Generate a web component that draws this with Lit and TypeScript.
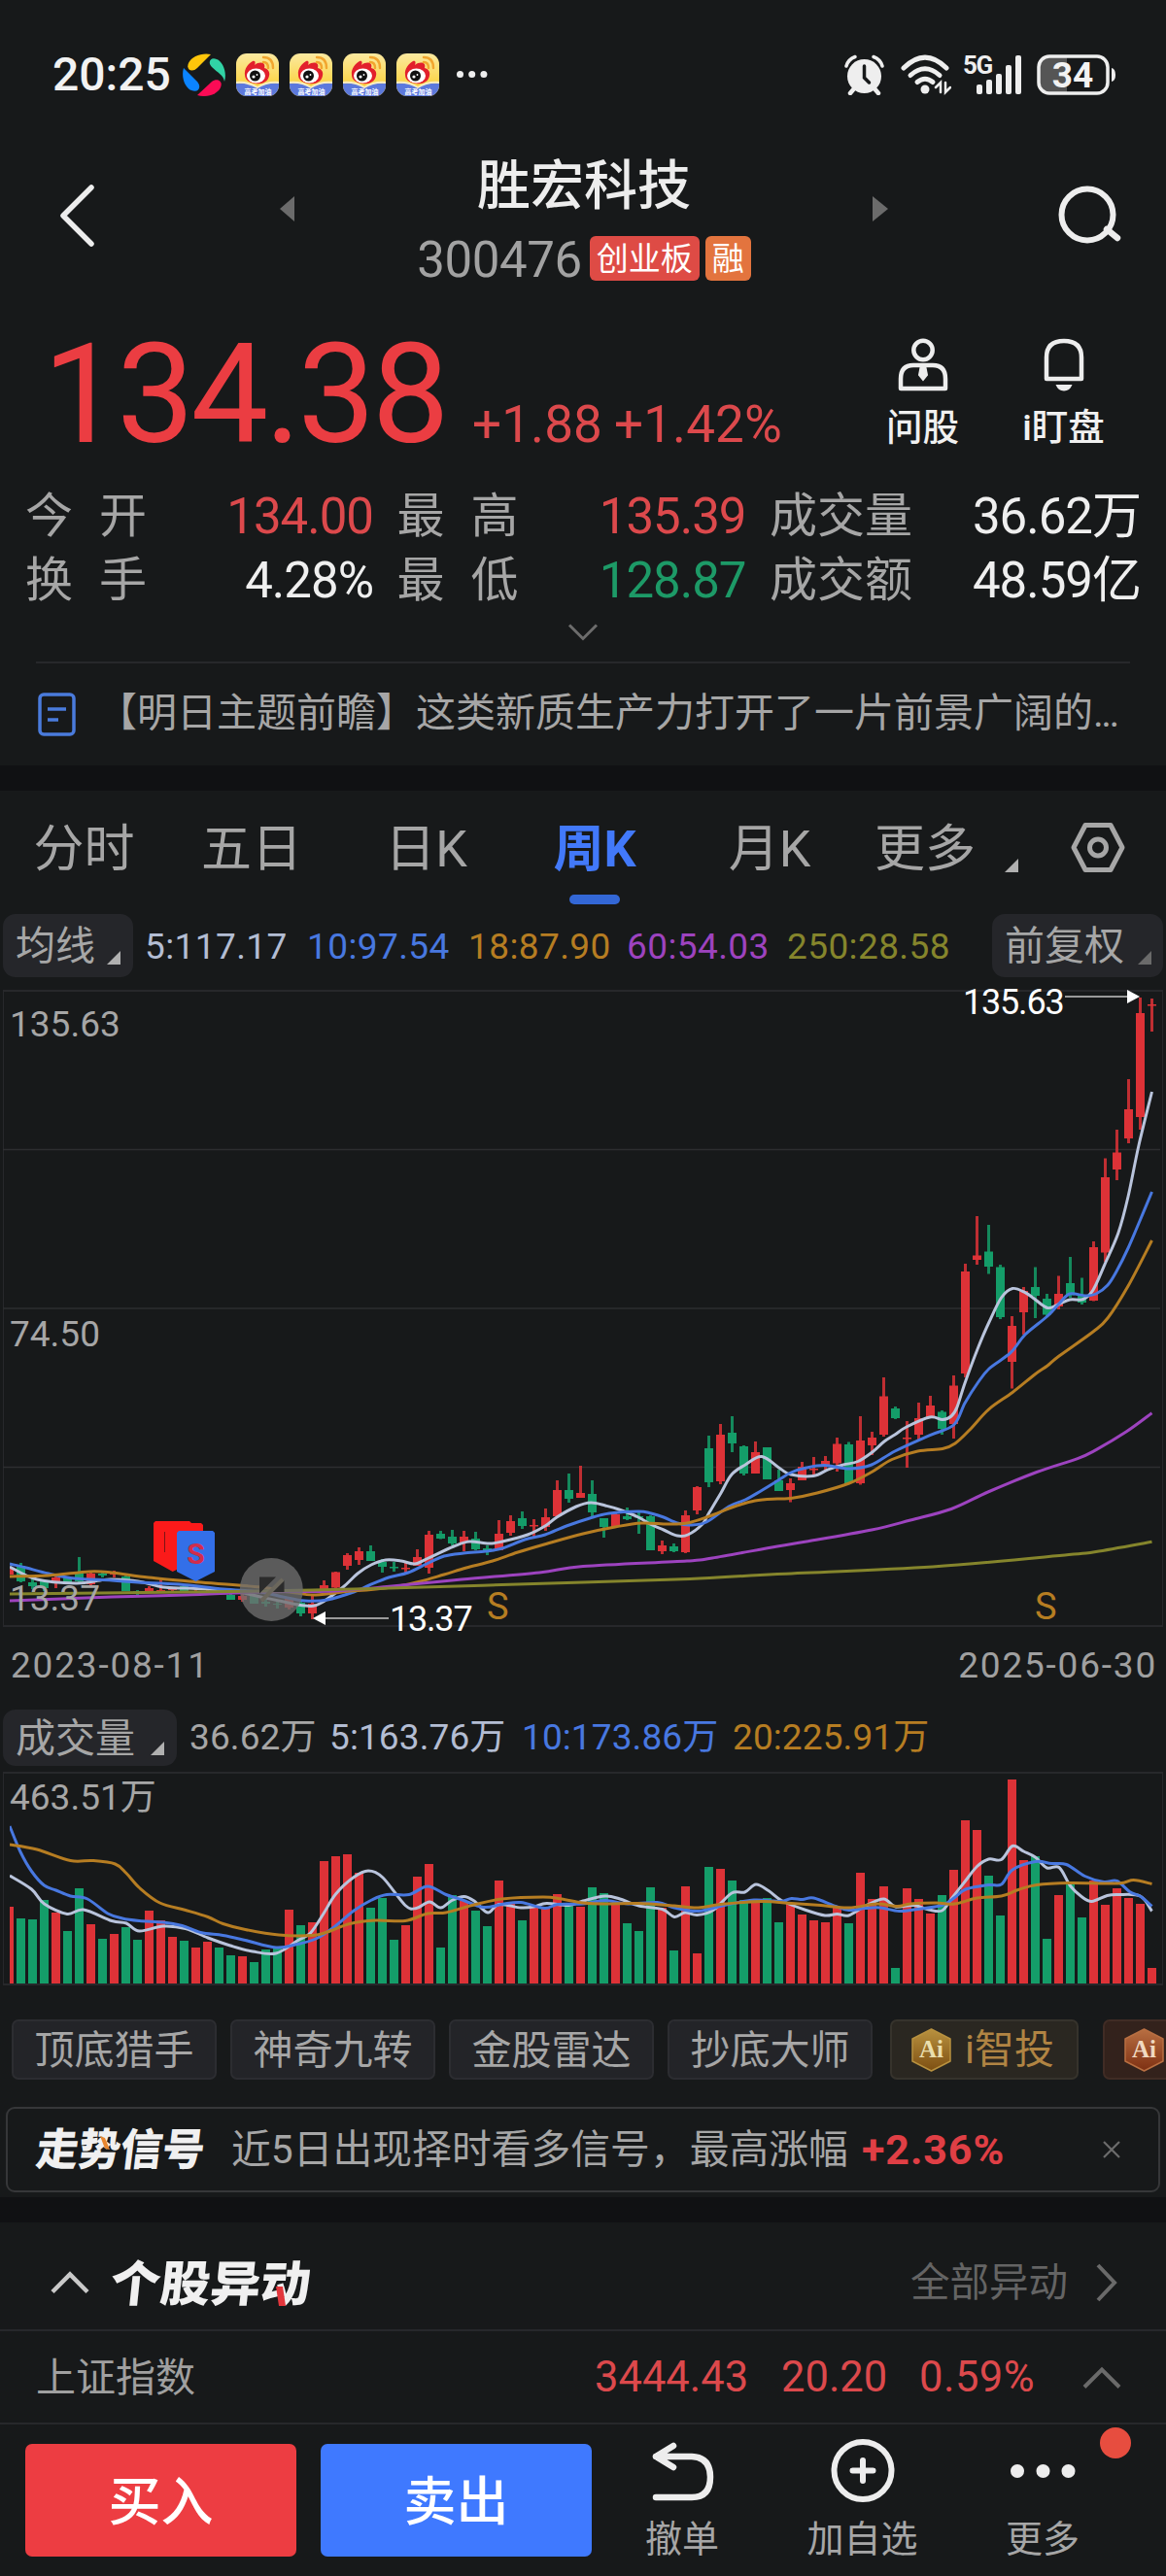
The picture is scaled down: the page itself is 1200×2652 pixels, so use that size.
import { LitElement, html, svg, css } from "lit";
import { customElement } from "lit/decorators.js";

type Pt = [number, number];

// Weekly candles: high, body top, body bottom, low (chart units, y grows downward)
const CANDLES: number[][] = [
  [1615,1615,1621,1621],[1609,1612,1628,1629],[1625,1629,1633,1636],[1627,1628,1635,1638],[1623,1624,1628,1635],
  [1623,1624,1630,1631],[1603,1619,1628,1630],[1619,1620,1631,1632],[1618,1620,1622,1624],[1617,1620,1621,1624],
  [1622,1623,1638,1638],[1637,1638,1639,1642],[1633,1635,1638,1638],[1626,1637,1638,1640],[1634,1635,1637,1638],
  [1633,1633,1638,1638],[1636,1638,1639,1640],[1637,1638,1640,1641],[1638,1639,1641,1641],[1641,1642,1647,1647],
  [1641,1643,1647,1649],[1642,1643,1651,1651],[1647,1649,1651,1654],[1648,1651,1652,1656],[1645,1646,1655,1657],
  [1648,1650,1661,1664],[1643,1651,1661,1667],[1627,1632,1637,1637],[1618,1618.5,1634.5,1635],[1599,1601,1612,1616],
  [1593,1597,1606,1611],[1591,1597,1607,1607],[1605,1608,1613,1619],[1608,1613,1614.5,1618],[1609,1614,1615.5,1619],
  [1595,1603,1612,1612],[1576,1580,1614,1620],[1576,1579,1584,1584.5],[1575,1582,1589,1591],[1576,1582,1588,1597],
  [1577,1584,1595,1596],[1591,1594,1596,1601],[1565,1579,1596,1596],[1560,1566,1578,1581],[1556,1563,1571,1574],
  [1564,1570,1571.5,1583],[1553,1562,1572,1576],[1524,1534,1561,1561],[1517,1534,1543,1547],[1509,1537,1542,1542],
  [1524,1538,1557,1561],[1563,1563,1572,1583],[1556,1559,1572,1572],[1552,1561,1564,1565],[1557,1561,1562.5,1579],
  [1560,1561,1596,1596],[1586,1591,1597,1600],[1589,1592,1597,1598],[1555,1560,1598,1599],[1530,1531,1555,1559],
  [1478,1491,1526,1531],[1466,1477,1525,1528],[1458,1475,1486,1495],[1488,1489,1517,1519],[1484,1495,1517,1517],
  [1490,1490,1523,1523],[1513,1524,1535,1535],[1522,1527,1534,1546.5],[1505,1510,1524,1524],[1500,1512,1513.5,1519],
  [1499,1504,1510,1515],[1480,1486.5,1506.5,1515],[1484.5,1487,1527,1527],[1458,1483,1527,1528.5],[1474,1480,1488,1498],
  [1418,1437.5,1477,1479],[1448,1450,1460,1461],[1463,1480,1481.5,1511],[1444,1460,1477,1482],[1437,1447,1459,1459],
  [1452,1453.5,1471,1477],[1416,1426.5,1466,1481],[1301,1309,1414,1418],[1252,1292.5,1297,1302],[1261,1288.5,1304,1311.5],
  [1302,1304.5,1356,1358],[1355,1365,1402,1429.5],[1325,1329,1351,1374],[1304.5,1325,1334,1357],[1332,1337,1353.5,1355],
  [1313.5,1332,1345,1348],[1294,1321,1333.5,1336],[1315.5,1334,1341,1343],[1278,1284,1339,1339.5],[1192.5,1212,1289.5,1299],
  [1163,1186.5,1204,1215],[1111,1142,1172,1177],[1027,1043,1150,1163],[1028,1034,1035.5,1062],
];

// r = week closed up, g = week closed down
const DIRECTION =
  "rgggrggrgrggrrrgrrggrggg" + "rgrrrrrggg" + "rrrgg" + "rggrrgrrrg" + "r" +
  "ggrgggrgrr" + "grggrggrrr" + "rrgrrrgrrr" + "grrrggrrgg" + "rggrrrrrr";

// Volume bar heights, thirds of a unit
const VOLUME = [
  237,201,198,258,219,162,294,183,138,153,174,135,225,195,144,132,111,129,111,87,84,66,105,111,228,180,189,378,393,399,
  342,234,264,135,180,330,369,111,273,255,225,177,318,246,195,234,237,276,239,237,297,279,243,186,162,297,234,102,300,93,
  360,354,318,258,255,264,189,246,213,195,189,234,186,342,261,300,48,294,261,216,273,351,504,474,333,210,630,381,393,138,
  273,312,204,318,243,294,264,246,48,
];

const UP = "#dd3237";
const DOWN = "#149d69";

const MA5: Pt[] = [[10,1613],[38,1626],[78,1630],[103,1627],[115,1626],[142,1628],[168,1634],[191,1635],[214,1636],[245,1639],[268,1644],[287,1648],[314,1653],[329,1651],[353,1634],[368,1620],[382,1611],[397,1606],[413,1607],[427,1610],[441,1604],[467,1592],[483,1587],[503,1589],[517,1587],[543,1580],[561,1571],[573,1562],[593,1551],[608,1547],[623,1550],[637,1554],[657,1562],[669,1569],[683,1575],[697,1581],[708,1580],[723,1569],[730,1557],[742,1537],[753,1518],[767,1508],[784,1499.5],[803,1512],[814,1518],[837,1519.5],[853,1512.6],[868,1508],[883,1504.5],[897,1495.5],[910,1484],[921,1477],[933,1469],[957,1459],[970,1461.6],[979,1458],[985,1448.6],[993,1424],[1006,1389],[1018,1361],[1030.5,1336],[1042,1326.5],[1055,1330.6],[1065,1337.5],[1078,1346.5],[1089,1343],[1101,1338],[1115,1337.5],[1125,1328],[1137,1301.6],[1151,1269],[1161,1232],[1172,1179],[1185.5,1124]];
const MA10: Pt[] = [[10,1610],[27,1614],[50,1620],[77,1625],[115,1627],[142,1629],[184,1631],[230,1636],[268,1639],[291,1644],[314,1648],[337,1647],[364,1639],[380,1632],[400,1624],[420,1619],[441,1609],[457,1602],[477,1599],[500,1597],[517,1594],[540,1585],[561,1580],[583,1571],[607,1563],[627,1558],[657,1556],[670,1558],[683,1562],[697,1568],[710,1570],[727,1567],[750,1551],[767,1544],[783,1535],[801,1524],[814,1516],[830,1511],[849,1508.6],[874,1512],[897,1508],[921,1494],[957,1477.6],[981.5,1467],[993,1444.5],[1006,1424],[1018,1409],[1040,1392.7],[1055,1374],[1078,1355],[1090,1342],[1101,1332],[1117,1334],[1128,1332],[1140,1323],[1149.5,1308],[1161,1285],[1173,1257],[1185.5,1227]];
const MA18: Pt[] = [[10,1623],[50,1622],[92,1618],[115,1619],[153,1624],[207,1629],[268,1634],[298,1639],[325,1642],[360,1638],[377,1637],[410,1633],[433,1628],[457,1621],[480,1614],[507,1607],[533,1598],[567,1588],[600,1579],[633,1572],[660,1568],[687,1569],[707,1568],[730,1561],[753,1552],[777,1545],[800,1543],[814,1542.5],[841,1537],[874,1527],[897,1515.5],[918,1502.5],[944.5,1494],[970,1491.5],[983,1486],[998,1472],[1018,1450.6],[1042,1433.5],[1065,1415],[1078,1406],[1090,1396],[1125,1371],[1140,1357],[1161,1324],[1185.5,1277]];
const MA60: Pt[] = [[10,1648],[115,1644],[191,1642],[268,1639],[344,1638],[398,1633.5],[475,1626],[555,1619],[600,1612.6],[707,1607],[733,1604],[800,1592],[830,1587],[897,1575],[937,1565],[979,1553.5],[1018,1535.5],[1067,1515.5],[1109,1501.6],[1128,1492.6],[1159,1474],[1185.5,1454.7]];
const MA250: Pt[] = [[10,1641],[268,1638],[400,1635],[600,1629],[710,1625.5],[800,1620.5],[960,1613],[1100,1600.5],[1128,1597.5],[1185.5,1587.3]];

const VMA5: Pt[] = [[10,1931],[32.5,1945],[45.5,1960],[69,1970.5],[86,1966],[115,1977.5],[130,1980],[143.5,1988],[168,1983],[191,1985.5],[214,1995],[237,2003],[260,2009],[284,2011],[306,1998],[319.5,1990],[333,1970],[345.5,1950],[363.5,1933],[379,1926],[394,1933],[417,1961.5],[428.5,1964.5],[442,1958],[453.5,1964],[465,1956.5],[477.5,1952.5],[488,1957],[502,1969],[513.5,1960.5],[536,1964],[549.5,1963],[562.5,1959.5],[585.5,1961.5],[600,1957],[623,1952],[638,1955],[657.5,1962],[681.5,1965.5],[694,1973.5],[705,1969],[717.5,1971.5],[734,1966.5],[753,1949],[766.5,1948],[778,1940],[791,1946.5],[805,1957],[829.5,1966.5],[849,1972],[861.5,1970.5],[873.5,1972],[891,1962],[909.5,1955],[921.5,1963],[940.5,1961.5],[956,1966],[969.5,1967],[979,1955],[993.5,1936.5],[1005.5,1921.5],[1017.5,1914],[1030.5,1914.5],[1042,1900.5],[1053.5,1906],[1065.5,1912],[1077.5,1923],[1090,1922.5],[1101.5,1941.5],[1113,1952.5],[1123.5,1957.5],[1139.5,1951.5],[1151,1950.5],[1173.5,1952],[1185.5,1967.5]];
const VMA10: Pt[] = [[10,1880],[21,1906.5],[32.5,1926.5],[45.5,1941],[57.5,1946],[72.5,1952],[90,1955],[111,1970],[126,1975],[143.5,1977.5],[168,1979],[187.5,1982.5],[206.5,1989.5],[229.5,1992.5],[252.5,1997.5],[284,2005],[306,2001.5],[325,1996],[344.5,1983.5],[363.5,1967.5],[382.5,1956],[398,1950.5],[421,1950.5],[440,1942],[459,1950.5],[474.5,1955.5],[497.5,1963.5],[516.5,1960.5],[536,1958.5],[560.5,1964.5],[574,1960.5],[600,1960],[623,1956.5],[646,1960],[676.5,1958.5],[694,1964],[718.5,1967.5],[745.5,1961.5],[776,1956],[803,1957.5],[814.5,1954.5],[826,1955.5],[837.5,1954],[860,1962.5],[873.5,1966.5],[891,1964.5],[906,1964],[925.5,1967.5],[944.5,1965.5],[969.5,1961.5],[982.5,1953.5],[994,1945],[1017.5,1940.5],[1030.5,1940],[1042,1925],[1065.5,1916.5],[1082,1918.5],[1097.5,1919.5],[1116.5,1931.5],[1136,1937.5],[1149.5,1936.5],[1162.5,1947.5],[1174,1952.5],[1185.5,1962.5]];
const VMA20: Pt[] = [[10,1899],[38,1904],[72.5,1915.5],[95.5,1915.5],[118.5,1919],[130,1928.5],[143.5,1943.5],[164.5,1959],[191,1966.5],[214,1973.5],[229.5,1980.5],[252.5,1986.5],[287,1992],[321.5,1992.5],[337,1989],[360,1980.5],[386.5,1977],[417,1977.5],[440,1970],[459,1969],[486,1961.5],[516.5,1955],[559,1953],[578,1955],[600,1959],[623,1960],[657.5,1959.5],[694,1962],[718.5,1964],[741.5,1960.5],[783.5,1957.5],[814.5,1959.5],[845,1961.5],[873.5,1964],[902.5,1960],[923.5,1962.5],[937,1960],[963.5,1959],[982.5,1960],[1005.5,1954],[1030.5,1952],[1048,1945.5],[1067,1940.5],[1101.5,1938.5],[1151,1939],[1166.5,1935.5],[1185.5,1939.5]];

const centerX = (i: number) => 9.5 + 12 * i;

/** Catmull-Rom spline through the points, as cubic Bézier segments. */
function smooth(p: Pt[]): string {
  let d = `M${p[0][0]} ${p[0][1]}`;
  for (let i = 0; i < p.length - 1; i++) {
    const a = p[i - 1] ?? p[i], b = p[i], c = p[i + 1], e = p[i + 2] ?? c;
    const k = 6;
    d += `C${(b[0] + (c[0] - a[0]) / k).toFixed(1)} ${(b[1] + (c[1] - a[1]) / k).toFixed(1)} ${(c[0] - (e[0] - b[0]) / k).toFixed(1)} ${(c[1] - (e[1] - b[1]) / k).toFixed(1)} ${c[0]} ${c[1]}`;
  }
  return d;
}

const WHITE = "#b9c4dc", BLUE = "#4878e0", ORANGE = "#b67d22", PURPLE = "#9d43bf", OLIVE = "#85852c";

const base = css`
  :host { display: block; }
  * { box-sizing: border-box; }
  svg { display: block; flex: none; }
`;

@customElement("status-bar")
export class StatusBar extends LitElement {
  static styles = [base, css`
    .bar { display: flex; align-items: center; height: 110px; padding: 44px 51px 0 54px; color: #f2f2f2; }
    .time { font-size: 48px; font-weight: 500; width: 134px; line-height: 1; }
    .apps { display: flex; gap: 11px; }
    .dots { margin-left: 17px; }
    .right { display: flex; align-items: center; margin-left: auto; }
    .wifi { margin-left: 17px; }
    .cell { margin-left: 12px; overflow: visible; }
    .batt { margin-left: 15px; overflow: visible; }
    .gen { letter-spacing: -1.5px; }
  `];
  private weibo() {
    return html`<svg width="44" height="44" viewBox="0 0 44 44">
      <defs>
        <linearGradient id="y" x1="0" y1="0" x2="0" y2="1"><stop offset="0" stop-color="#fbe9a0"/><stop offset=".8" stop-color="#fbd23c"/></linearGradient>
        <clipPath id="c"><rect width="44" height="44" rx="11"/></clipPath>
      </defs>
      <g clip-path="url(#c)">
        <rect width="44" height="44" fill="url(#y)"/>
        <path d="M0 31Q12 29 22 35Q32 29 44 31V44H0Z" fill="#5c79dc"/>
        <path d="M0 29Q13 28 22 34Q31 28 44 29V31Q32 30 22 36Q12 30 0 31Z" fill="#f8edc4"/>
      </g>
      <path d="M9 22C8 16 13 10 17 8C20 7 20 10 19 12C24 8 31 9 29 15C33 16 35 19 34 23C33 29 27 32 20 31C13 30 9 27 9 22Z" fill="#e2202c"/>
      <ellipse cx="20.500" cy="23" rx="9.500" ry="7.500" fill="#fff"/>
      <circle cx="19.500" cy="23" r="5.500" fill="#111"/>
      <circle cx="18" cy="24" r="1.600" fill="#fff"/><circle cx="21.500" cy="22" r=".9" fill="#fff"/>
      <path d="M28 4Q38 4 38 15M28 9Q33 9 33 15" fill="none" stroke="#f2a52e" stroke-width="2.400" stroke-linecap="round"/>
      <text x="22.500" y="41.500" font-size="7" fill="#fff" text-anchor="middle" font-weight="700">高考加油</text>
    </svg>`;
  }
  render() {
    return html`<div class="bar">
      <span class="time">20:25</span>
      <div class="apps">
        <svg width="44" height="44" viewBox="0 0 44 44">
          <path d="M29 1C20-1 9 3 6 10C3 17 10 20 15 15Z" fill="#ffc60b"/>
          <path d="M43 29C46 19 41 8 35 6C29 3 25 9 30 14C36 20 42 22 43 29Z" fill="#31d3a5"/>
          <path d="M15 43C25 46 36 42 39 35C42 28 35 25 30 29Z" fill="#fb0b55"/>
          <path d="M1 15C-2 25 3 36 9 38C16 41 20 35 15 29Z" fill="#0b84ff"/>
        </svg>
        ${[0, 1, 2, 3].map(() => this.weibo())}
      </div>
      <svg class="dots" width="34" height="10" viewBox="0 0 34 10" fill="#eee"><circle cx="4.500" cy="4.500" r="3.500"/><circle cx="16.700" cy="4.500" r="3.500"/><circle cx="28.900" cy="4.500" r="3.500"/></svg>
      <div class="right">
        <svg width="41" height="42" viewBox="0 0 41 42">
          <path d="M11 34L6 40M30 34L35 40" stroke="#eee" stroke-width="4.500" stroke-linecap="round"/>
          <circle cx="20.500" cy="22.500" r="17.500" fill="#eee"/>
          <path d="M20.500 12V24L25.500 29" fill="none" stroke="#17191a" stroke-width="3.500" stroke-linecap="round"/>
          <path d="M2 12Q4 5 11 2.500M39 12Q37 5 30 2.500" fill="none" stroke="#eee" stroke-width="3.500" stroke-linecap="round"/>
        </svg>
        <svg class="wifi" width="52" height="42" viewBox="0 0 52 42" fill="none" stroke="#eee" stroke-linecap="round">
          <path d="M3 14Q25-8 47 14" stroke-width="5"/><path d="M10 21.500Q25 8 40 21.500" stroke-width="5"/><path d="M17 28.500Q25 22 33 28.500" stroke-width="5"/>
          <circle cx="25" cy="36" r="4.500" fill="#eee" stroke="none"/>
          <path d="M41 39V29L36 34M46 29V39L51 34" stroke-width="2.500"/>
        </svg>
        <svg class="cell" width="61" height="42" viewBox="0 0 61 42" fill="#eee">
          <text class="gen" x="0" y="20" font-size="26" font-weight="700">5G</text>
          <rect x="14" y="31" width="6" height="10" rx="2"/><rect x="24" y="26" width="6" height="15" rx="2"/><rect x="34" y="20" width="6" height="21" rx="2"/><rect x="44" y="11" width="6" height="30" rx="2"/><rect x="54" y="1" width="6" height="40" rx="2"/>
        </svg>
        <svg class="batt" width="82" height="42" viewBox="0 0 82 42">
          <path d="M31 3H14Q3 3 3 14V28Q3 39 14 39H31Z" fill="#555"/>
          <rect x="2" y="2" width="71" height="38" rx="11" fill="none" stroke="#eee" stroke-width="3.500"/>
          <path d="M77 14Q81 15 81 21Q81 27 77 28Z" fill="#eee"/>
          <text x="37" y="34" text-anchor="middle" font-size="37" font-weight="700" fill="#f2f2f2">34</text>
        </svg>
      </div>
    </div>`;
  }
}

@customElement("stock-header")
export class StockHeader extends LitElement {
  static styles = [base, css`
    .head { display: flex; height: 210px; padding-left: 60px; }
    .back { margin-top: 79px; margin-right: 190px; }
    .tri { margin-top: 92px; }
    .mid { width: 594px; display: flex; flex-direction: column; align-items: center; padding-top: 54px; gap: 24px; }
    .name { font-size: 55px; line-height: 55px; font-weight: 500; color: #ededed; white-space: nowrap; }
    .sub { display: flex; align-items: center; height: 46px; }
    .code { font-size: 51px; line-height: 46px; color: #a2a2a2; letter-spacing: -0.4px; margin-right: 8px; padding-top: 3px; }
    .tag { height: 46px; line-height: 47px; font-size: 33px; color: #fff; border-radius: 6px; text-align: center; }
    .red { background: #de4b45; width: 113px; margin-right: 6px; }
    .org { background: #e3743e; width: 47px; }
    .find { margin-top: 80px; margin-left: 174px; }
  `];
  render() {
    return html`<div class="head">
      <svg class="back" width="38" height="66" viewBox="0 0 38 66"><path d="M34 4L5 33L34 62" fill="none" stroke="#ededed" stroke-width="5.500" stroke-linecap="round" stroke-linejoin="round"/></svg>
      <svg class="tri" width="16" height="26" viewBox="0 0 16 26"><path d="M15 0V26L0 13Z" fill="#6b6b6b"/></svg>
      <div class="mid">
        <div class="name">胜宏科技</div>
        <div class="sub"><span class="code">300476</span><span class="tag red">创业板</span><span class="tag org">融</span></div>
      </div>
      <svg class="tri" width="16" height="26" viewBox="0 0 16 26"><path d="M0 0V26L16 13Z" fill="#6b6b6b"/></svg>
      <svg class="find" width="68" height="64" viewBox="0 0 68 64" fill="none" stroke="#ededed"><circle cx="31" cy="31" r="26.500" stroke-width="6"/><path d="M51 46L62 55" stroke-width="6.500" stroke-linecap="round"/></svg>
    </div>`;
  }
}

@customElement("stock-quote")
export class StockQuote extends LitElement {
  static styles = [base, css`
    .top { display: flex; height: 177px; padding: 16px 33px 0 44px; }
    .nums { display: flex; align-items: baseline; height: 142px; white-space: nowrap; flex: 1; }
    .price { font-size: 142px; line-height: 142px; color: #eb3d42; letter-spacing: -3.6px; width: 442px; }
    .chg { font-size: 53px; line-height: 53px; color: #dc494c; letter-spacing: 0.1px; width: 146px; }
    .acts { display: flex; padding-top: 12px; }
    .act { width: 145px; display: flex; flex-direction: column; align-items: center; color: #f0f0f0; font-size: 37.500px; line-height: 38px; font-weight: 500; gap: 17px; }
    .stats { display: grid; grid-template-columns: 356px 357px 380px; column-gap: 26.500px; grid-auto-rows: 66px; padding-left: 26px; }
    .stat { display: flex; justify-content: space-between; align-items: center; font-size: 49px; line-height: 60px; white-space: nowrap; color: #a6a6a6; padding-top: 4px; }
    .two { letter-spacing: 27px; }
    .val { font-size: 51px; letter-spacing: -1px; color: #efefef; margin-right: -2px; padding-bottom: 1px; }
    .up { color: #dc494c; }
    .dn { color: #1d9a67; }
    .more { display: flex; justify-content: center; height: 52px; padding-top: 12px; }
    .news { display: flex; align-items: center; margin: 0 37px; height: 107px; border-top: 2px solid #27282b; padding-left: 2px; }
    .txt { margin-left: 22px; font-size: 41px; white-space: nowrap; color: #a6a6a6; line-height: 50px; padding-bottom: 3px; }
    .dot3 { letter-spacing: -2.6px; }
  `];
  render() {
    const stats = [
      ["今开", "134.00", "up"], ["最高", "135.39", "up"], ["成交量", "36.62万", ""],
      ["换手", "4.28%", ""], ["最低", "128.87", "dn"], ["成交额", "48.59亿", ""],
    ];
    return html`
      <div class="top">
        <div class="nums"><span class="price">134.38</span><span class="chg">+1.88</span><span class="chg">+1.42%</span></div>
        <div class="acts">
          <div class="act">
            <svg width="54" height="56" viewBox="0 0 54 56" fill="none" stroke="#ededed" stroke-width="4.500"><circle cx="27" cy="12.500" r="9.700"/><path d="M17 28H37Q50 28 50 42V52H4V42Q4 28 17 28Z" stroke-linejoin="round"/><path d="M25 28L23 38L27 43L31 38L29 28Z" fill="#ededed" stroke-width="2"/></svg>
            问股
          </div>
          <div class="act">
            <svg width="54" height="56" viewBox="0 0 54 56" fill="none" stroke="#ededed" stroke-width="4.500"><path d="M9 42V20Q9 3 27 3Q45 3 45 20V42Z" stroke-linejoin="round"/><path d="M18.500 48H35.500Q33 54.500 27 54.500Q21 54.500 18.500 48Z" fill="#ededed" stroke="none"/></svg>
            i盯盘
          </div>
        </div>
      </div>
      <div class="stats">
        ${stats.map(([k, v, c]) => html`<div class="stat"><span class=${k.length === 2 ? "two" : ""}>${k}</span><span class="val ${c}">${v}</span></div>`)}
      </div>
      <div class="more"><svg width="32" height="20" viewBox="0 0 32 20"><path d="M2 2.500L16 16.500L30 2.500" fill="none" stroke="#6c6c6c" stroke-width="3"/></svg></div>
      <div class="news">
        <svg width="39" height="45" viewBox="0 0 39 45" fill="none" stroke="#4a7bdc" stroke-width="3.500"><rect x="2" y="2" width="35" height="41" rx="4"/><path d="M10 17H29M10 28H21"/></svg>
        <span class="txt">【明日主题前瞻】这类新质生产力打开了一片前景广阔的<span class="dot3">...</span></span>
      </div>`;
  }
}

@customElement("kline-panel")
export class KlinePanel extends LitElement {
  static styles = [base, css`
    .tabs { display: grid; grid-template-columns: 173px 172px 187px 160px 200px 120px 60px 128px; height: 120px; }
    .tab { display: flex; flex-direction: column; align-items: center; font-size: 52px; line-height: 60px; padding-top: 31px; color: #a6a6a6; white-space: nowrap; }
    .on { color: #4279fa; font-weight: 700; }
    .line { width: 52px; height: 10px; border-radius: 5px; background: #3367d6; margin-top: 16px; }
    .caret { padding: 70px 0 0 22px; }
    .hex { padding: 32px 0 0 30px; }
    .legend { display: flex; align-items: center; height: 79px; padding: 0 3px; font-size: 37px; line-height: 40px; white-space: nowrap; letter-spacing: 0.4px; }
    .val { padding-top: 2px; }
    .chip { display: flex; align-items: center; height: 65px; background: #25262a; border-radius: 13px; padding-left: 13px; font-size: 41px; color: #a6a6a6; flex: none; letter-spacing: 0; }
    .chip span { line-height: 50px; padding-top: 1px; }
    .chip svg { margin-top: 24px; }
    .ma { width: 134px; margin-right: 12px; }
    .ma svg { margin-left: 12px; }
    .fq { width: 176px; margin-left: auto; }
    .fq svg { margin-left: 14px; }
    .vol { width: 179px; height: 58px; margin-right: 13px; }
    .vol svg { margin-left: 16px; margin-top: 22px; }
    .m5 { width: 167px; color: #b3bdd3; }
    .m10 { width: 166px; color: #4878e0; }
    .m18 { width: 163px; color: #b67d22; }
    .m60 { width: 165px; color: #9d43bf; }
    .m250 { color: #85852c; }
    .lv { height: 70px; letter-spacing: 0.1px; }
    .v0 { width: 144px; color: #a6a6a6; }
    .v5 { width: 198px; color: #b3bdd3; }
    .v10 { width: 217px; color: #4878e0; }
    .v20 { color: #b67d22; }
    .dates { display: flex; justify-content: space-between; align-items: center; height: 74px; padding: 0 9px 4px 11px; color: #a0a0a0; font-size: 37px; line-height: 40px; letter-spacing: 1.8px; }
    text { font-size: 37px; }
    .lab { fill: #a6a6a6; }
    .wht { fill: #fff; font-size: 36px; letter-spacing: -1.2px; }
    .sig { fill: #b67d22; font-size: 38px; }
    .mk { fill: #d22c4c; font-size: 30px; font-weight: 700; }
  `];
  private caret(color = "#b0b0b0") {
    return html`<svg width="14" height="14" viewBox="0 0 14 14"><path d="M14 0V14H0Z" fill=${color}/></svg>`;
  }
  private curve(p: Pt[], color: string) {
    return svg`<path d=${smooth(p)} fill="none" stroke=${color} stroke-width="3"/>`;
  }
  render() {
    return html`
      <div class="tabs">
        ${["分时", "五日", "日K", "周K", "月K", "更多"].map((t) =>
          html`<div class="tab ${t === "周K" ? "on" : ""}">${t}${t === "周K" ? html`<div class="line"></div>` : ""}</div>`)}
        <div class="caret">${this.caret()}</div>
        <div class="hex"><svg width="56" height="53" viewBox="0 0 56 53" fill="none" stroke="#a6a6a6" stroke-width="5"><path d="M15 3.500H41L53 26.500L41 49.500H15L3 26.500Z" stroke-linejoin="round"/><circle cx="28" cy="26.500" r="8.500"/></svg></div>
      </div>
      <div class="legend">
        <div class="chip ma"><span>均线</span>${this.caret()}</div>
        <span class="val m5">5:117.17</span><span class="val m10">10:97.54</span><span class="val m18">18:87.90</span><span class="val m60">60:54.03</span><span class="val m250">250:28.58</span>
        <div class="chip fq"><span>前复权</span>${this.caret("#6a6a6a")}</div>
      </div>
      <svg width="1200" height="667" viewBox="0 1013 1200 667">
        <g stroke="#27282b" stroke-width="2" fill="none">
          <path d="M3 1020H1197M3 1674H1197"/><path d="M3.500 1020V1674M1196.500 1020V1674" stroke-width="1"/>
          <path d="M3 1183.500H1194M3 1347H1194M3 1510.500H1194" stroke="#2d2e30" stroke-width="1.500"/>
        </g>
        <clipPath id="plot"><rect x="10" y="1013" width="1190" height="667"/></clipPath>
        <g clip-path="url(#plot)">
          ${CANDLES.map(([h, t, b, l], i) => {
            const c = DIRECTION[i] === "r" ? UP : DOWN, x = centerX(i);
            return svg`<rect x=${x - 1.5} y=${h} width="3" height=${l - h} fill=${c} opacity=".85"/><rect x=${x - 4.5} y=${t} width="9" height=${b - t} fill=${c}/>`;
          })}
          ${this.curve(MA5, WHITE)}${this.curve(MA10, BLUE)}${this.curve(MA18, ORANGE)}${this.curve(MA60, PURPLE)}${this.curve(MA250, OLIVE)}
        </g>
        <text class="lab" x="10" y="1067">135.63</text>
        <text class="lab" x="10" y="1386">74.50</text>
        <text class="lab" x="10" y="1658">13.37</text>
        <text class="wht" x="991" y="1043.500">135.63</text>
        <path d="M1096 1026H1162" stroke="#9a9a9a" stroke-width="2"/><path d="M1160 1019V1033L1173 1026Z" fill="#fff"/>
        <text class="wht" x="401" y="1679">13.37</text>
        <path d="M334 1666H400" stroke="#9a9a9a" stroke-width="2"/><path d="M335 1659V1673L322 1666Z" fill="#fff"/>
        <text class="sig" x="501" y="1667">S</text><text class="sig" x="1065" y="1667">S</text>
        <path d="M160 1566H195L197 1568H207L209 1570V1610L190 1612L177.700 1618L158 1607V1568Z" fill="#fb1a1a"/>
        <path d="M169.500 1577V1598" stroke="#7d1316" stroke-width="1"/>
        <path d="M184 1576H219L221 1578V1618L201.500 1628L182 1618V1578Z" fill="#336fe8"/>
        <text class="mk" x="201.500" y="1610" text-anchor="middle">S</text>
        <circle cx="279.300" cy="1636.500" r="32.500" fill="#6e6e6e" opacity=".78"/>
        <path d="M267 1623.500H284L267 1640.500ZM292.500 1627V1639H279.500Z" fill="#2b2b2b"/><path d="M269 1648L291 1626" stroke="#6b675c" stroke-width="4"/>
      </svg>
      <div class="dates"><span>2023-08-11</span><span>2025-06-30</span></div>
      <div class="legend lv">
        <div class="chip vol"><span>成交量</span>${this.caret()}</div>
        <span class="v0">36.62万</span><span class="v5">5:163.76万</span><span class="v10">10:173.86万</span><span class="v20">20:225.91万</span>
      </div>
      <svg width="1200" height="222" viewBox="0 1824 1200 222">
        <g stroke="#27282b" stroke-width="2" fill="none"><path d="M3 1825H1197M3 2043H1197"/><path d="M3.500 1825V2043M1196.500 1825V2043" stroke-width="1"/></g>
        <clipPath id="vplot"><rect x="10" y="1824" width="1190" height="222"/></clipPath>
        <g clip-path="url(#vplot)">
          ${VOLUME.map((v, i) => svg`<rect x=${centerX(i) - 4.5} y=${2042 - v / 3} width="9" height=${v / 3} fill=${DIRECTION[i] === "r" ? UP : DOWN}/>`)}
          ${this.curve(VMA5, WHITE)}${this.curve(VMA10, BLUE)}${this.curve(VMA20, ORANGE)}
        </g>
        <text class="lab" x="10" y="1863">463.51万</text>
      </svg>`;
  }
}

@customElement("tool-strip")
export class ToolStrip extends LitElement {
  static styles = [base, css`
    .strip { display: flex; gap: 14px; padding: 33px 0 0 12px; overflow: hidden; }
    .tool { width: 211px; height: 62px; border: 2px solid #2c2d31; background: #232428; border-radius: 7px; font-size: 41px; line-height: 61px; text-align: center; color: #a6a6a6; white-space: nowrap; flex: none; }
    .gold { width: 194px; margin-left: 4px; display: flex; align-items: center; padding-left: 20px; background: #2a2721; border-color: #36332c; color: #b08443; }
    .gold svg { margin-right: 14px; }
    .copper { width: 194px; margin-left: 11px; padding: 7px 0 0 20px; background: #33221c; border-color: #402c25; }
    .signal { display: flex; align-items: center; margin: 28px 6px 0; height: 88px; border: 2px solid #363739; border-radius: 9px; padding: 0 39px 0 27px; white-space: nowrap; }
    .msg { font-size: 40.800px; line-height: 50px; color: #a6a6a6; margin-left: 23px; width: 649px; }
    .pct { font-size: 43px; line-height: 50px; font-weight: 700; color: #e03f45; letter-spacing: 0.9px; }
    .x { margin-left: auto; }
    .logo { font-weight: 900; font-size: 45px; fill: #f0f0f0; }
  `];
  private ai(id: string, a: string, b: string, ink: string) {
    return html`<svg width="41" height="45" viewBox="0 0 41 45">
      <defs><linearGradient id=${id} x1="0" y1="0" x2="0" y2="1"><stop offset="0" stop-color=${a}/><stop offset="1" stop-color=${b}/></linearGradient></defs>
      <path d="M20.500 1L40 11V34L20.500 44L1 34V11Z" fill="url(#${id})" stroke=${a} stroke-width="1.500" stroke-linejoin="round"/>
      <text x="20.500" y="30" text-anchor="middle" font-family="Liberation Serif, serif" font-weight="700" font-size="25" fill=${ink}>Ai</text></svg>`;
  }
  render() {
    return html`
      <div class="strip">
        ${["顶底猎手", "神奇九转", "金股雷达", "抄底大师"].map((t) => html`<div class="tool">${t}</div>`)}
        <div class="tool gold">${this.ai("g", "#b8913f", "#7d4f12", "#eadfae")}i智投</div>
        <div class="tool copper">${this.ai("k", "#b86f42", "#7d2f12", "#f0d9c0")}</div>
      </div>
      <div class="signal">
        <svg width="180" height="54" viewBox="0 0 180 54">
          <g transform="translate(6 0) skewX(-7)"><text class="logo" x="0" y="43" textLength="173" lengthAdjust="spacingAndGlyphs">走势信号</text></g>
          <path d="M68 13L73 15L78 27L73 26Z" fill="#e8862e"/>
        </svg>
        <span class="msg">近5日出现择时看多信号，最高涨幅</span><span class="pct">+2.36%</span>
        <svg class="x" width="18" height="18" viewBox="0 0 18 18"><path d="M1 1L17 17M17 1L1 17" stroke="#6c6c6c" stroke-width="2.200"/></svg>
      </div>`;
  }
}

@customElement("moves-panel")
export class MovesPanel extends LitElement {
  static styles = [base, css`
    .head { display: flex; align-items: center; height: 112px; padding: 13px 48px 0 51px; border-bottom: 2px solid #27282b; }
    .title { margin-left: 16px; }
    .logo { font-weight: 900; font-size: 50px; fill: #f0f0f0; }
    .all { margin-left: auto; font-size: 40.500px; line-height: 50px; color: #646464; }
    .go { margin-left: 28px; margin-right: 1px; }
    .idx { display: flex; align-items: center; height: 96px; padding: 2px 46px 0 37px; border-bottom: 2px solid #27282b; font-size: 41px; line-height: 50px; color: #a0a0a0; }
    .n { font-size: 43.500px; color: #dc494c; }
    .a { margin-left: auto; width: 192px; } .b { width: 142px; } .c { width: 168px; letter-spacing: 0.5px; }
  `];
  render() {
    return html`
      <div class="head">
        <svg width="42" height="26" viewBox="0 0 42 26"><path d="M3 22.500L21 4.500L39 22.500" fill="none" stroke="#c9c9c9" stroke-width="4.500"/></svg>
        <svg class="title" width="218" height="56" viewBox="0 0 218 56">
          <g transform="translate(8 0) skewX(-6)"><text class="logo" x="0" y="47" textLength="206" lengthAdjust="spacingAndGlyphs">个股异动</text></g>
          <path d="M175 32H182L185 52H178Z" fill="#e2363c"/>
        </svg>
        <span class="all">全部异动</span>
        <svg class="go" width="24" height="40" viewBox="0 0 24 40"><path d="M3 2L20 20L3 38" fill="none" stroke="#6a6a6a" stroke-width="4"/></svg>
      </div>
      <div class="idx">
        <span>上证指数</span>
        <span class="n a">3444.43</span><span class="n b">20.20</span><span class="n c">0.59%</span>
        <svg width="40" height="24" viewBox="0 0 40 24"><path d="M2 21.500L20 3.500L38 21.500" fill="none" stroke="#6a6a6a" stroke-width="4"/></svg>
      </div>`;
  }
}

@customElement("trade-bar")
export class TradeBar extends LitElement {
  static styles = [base, css`
    .bar { display: flex; height: 156px; padding: 20px 0 0 26px; }
    .btn { width: 279px; height: 116px; border-radius: 7px; font-size: 54px; line-height: 122px; font-weight: 500; color: #fff; text-align: center; margin-right: 25px; }
    .buy { background: #ed3d42; }
    .sell { background: #3f79ff; }
    .item { display: flex; flex-direction: column; align-items: center; font-size: 38px; line-height: 40px; color: #a6a6a6; gap: 16px; margin-top: -7px; position: relative; }
    .i1 { width: 136px; } .i2 { width: 235px; } .i3 { width: 136px; }
    .dot { position: absolute; width: 32px; height: 32px; border-radius: 50%; background: #e74d3f; right: -23px; top: -10px; }
  `];
  render() {
    return html`<div class="bar">
      <div class="btn buy">买入</div><div class="btn sell">卖出</div>
      <div class="item i1"><svg width="68" height="69" viewBox="0 0 68 69" fill="none" stroke="#ededed" stroke-width="6.500" stroke-linecap="round" stroke-linejoin="round"><path d="M25 9L7 20L25 31M7 20H44Q63 21 63 41Q63 62 44 62H7"/></svg>撤单</div>
      <div class="item i2"><svg width="68" height="69" viewBox="0 0 68 69" fill="none" stroke="#ededed" stroke-width="6"><circle cx="34" cy="34.500" r="29.500"/><path d="M34 24V45M23.500 34.500H44.500" stroke-linecap="round"/></svg>加自选</div>
      <div class="item i3"><svg width="68" height="69" viewBox="0 0 68 69" fill="#ededed"><circle cx="8" cy="35" r="7"/><circle cx="34.500" cy="35" r="7"/><circle cx="60.500" cy="35" r="7"/></svg>更多<span class="dot"></span></div>
    </div>`;
  }
}

@customElement("app-root")
export class AppRoot extends LitElement {
  static styles = [base, css`
    :host { width: 1200px; height: 2652px; overflow: hidden; background: #17191a; font-family: Roboto, "Noto Sans CJK SC", sans-serif; }
    .band { height: 26px; background: #101113; }
    .b2 { margin-top: 5px; }
  `];
  render() {
    return html`
      <status-bar></status-bar>
      <stock-header></stock-header>
      <stock-quote></stock-quote>
      <div class="band"></div>
      <kline-panel></kline-panel>
      <tool-strip></tool-strip>
      <div class="band b2"></div>
      <moves-panel></moves-panel>
      <trade-bar></trade-bar>`;
  }
}
